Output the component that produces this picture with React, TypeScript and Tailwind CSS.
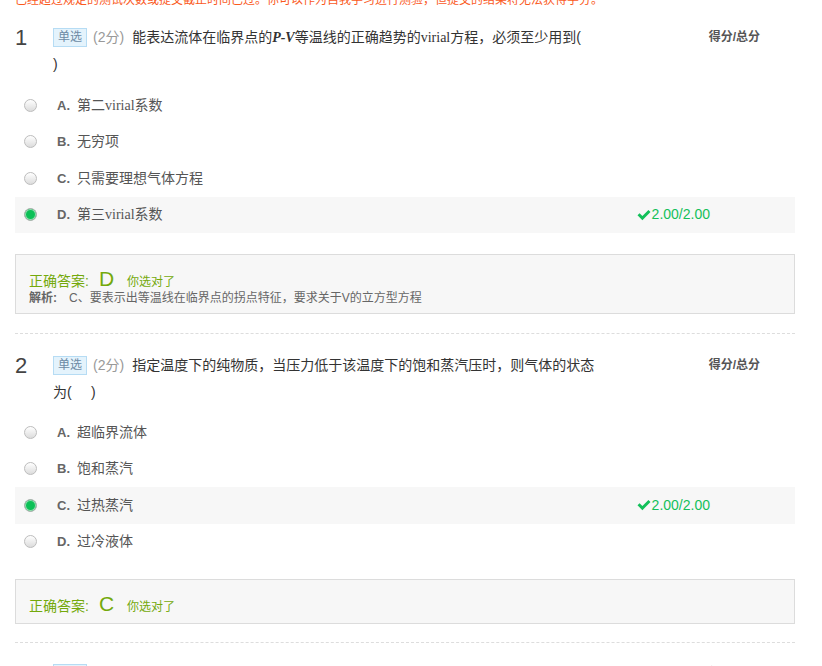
import React from "react";

const GREEN_ANS = "text-[#74a90b]";

function Tag() {
  return (
    <span className="inline-block align-top mt-[4px] h-[19px] px-[4px] border border-[#b6dcf4] bg-[#e4f3fc] text-[12px] leading-[17px] text-[#6c8aa4]">
      单选
    </span>
  );
}

function Check() {
  return (
    <svg width="14" height="12" viewBox="0 0 14 12" className="inline-block mr-[1px]">
      <path d="M0.5 6.3 L2.6 4.2 L5.4 7 L11.4 1 L13.5 3.1 L5.4 11.2 Z" fill="#13c05a" />
    </svg>
  );
}

function Radio({ checked }: { checked: boolean }) {
  if (checked) {
    return (
      <span className="block w-[13px] h-[13px] rounded-full border border-[#b0b0b0] bg-[#0cc057] shadow-[inset_0_0_0_1px_#8fdfae]" />
    );
  }
  return (
    <span className="block w-[13px] h-[13px] rounded-full border border-[#bdbdbd] bg-gradient-to-b from-[#ffffff] to-[#dcdcdc]" />
  );
}

type Opt = { label: string; text: React.ReactNode; checked?: boolean };

function Options({ opts }: { opts: Opt[] }) {
  return (
    <div className="flex flex-col">
      {opts.map((o) => (
        <div
          key={o.label}
          className={`flex items-center h-[36.5px] ${o.checked ? "bg-[#f7f7f7]" : ""}`}
        >
          <div className="ml-[9px]">
            <Radio checked={!!o.checked} />
          </div>
          <span className="ml-[20px] text-[13px] font-bold text-[#666]">{o.label}</span>
          <span className="ml-[7px] text-[14px] text-[#555]">{o.text}</span>
          {o.checked && (
            <span className="ml-auto mr-[85px] flex items-center text-[14px] text-[#13c05a]">
              <Check />
              2.00/2.00
            </span>
          )}
        </div>
      ))}
    </div>
  );
}

function Header({ num, children }: { num: string; children: React.ReactNode }) {
  return (
    <div className="flex items-start">
      <div className="w-[38px] text-[22px] leading-[27px] text-[#444]">{num}</div>
      <div className="w-[550px] text-[14px] leading-[27px] text-[#333]">{children}</div>
      <div className="ml-auto mr-[35px] text-[12px] leading-[27px] font-bold text-[#555]">得分/总分</div>
    </div>
  );
}

function Score() {
  return (
    <>
      <Tag />
      <span className="ml-[6px] text-[#999]">(2分)</span>
    </>
  );
}

function AnswerBox({ ans, analysis }: { ans: string; analysis?: string }) {
  return (
    <div className="border border-[#dcdcdc] bg-[#f7f7f7] pt-[12px] pb-[7px] pl-[13px]">
      <div className={`flex items-baseline h-[24px] ${GREEN_ANS}`}>
        <span className="text-[14px]">正确答案:</span>
        <span className="ml-[10px] text-[21px] leading-[24px]">{ans}</span>
        <span className="ml-[13px] text-[12px]">你选对了</span>
      </div>
      {analysis && (
        <div className="flex items-center h-[14px] mb-[1px] text-[12px] leading-[14px] text-[#666]">
          <span className="font-bold">解析:</span>
          <span className="ml-[12px]">{analysis}</span>
        </div>
      )}
    </div>
  );
}

const serif = { fontFamily: '"Liberation Serif", "Noto Sans CJK SC", serif' };

export default function App() {
  return (
    <div
      className="w-[822px] h-[666px] overflow-hidden bg-white"
      style={{ fontFamily: '"Liberation Sans", "Noto Sans CJK SC", sans-serif' }}
    >
      <div className="h-[6px] overflow-hidden pl-[15px]">
        <div className="-mt-[6px] text-[12px] leading-[12px] text-[#fa5a1e] whitespace-nowrap">
          已经超过规定的测试次数或提交截止时间已过。你可以作为自我学习进行测验，但提交的结果将无法获得学分。
        </div>
      </div>

      <div className="ml-[15px] w-[780px]">
        {/* Q1 */}
        <div className="mt-[18px]">
          <Header num="1">
            <Score />
            <span className="ml-[8px]">
              能表达流体在临界点的
              <span className="font-bold italic" style={serif}>P-V</span>
              等温线的正确趋势的<span style={serif}>virial</span>方程，必须至少用到(
            </span>
            <br />
            <span>)</span>
          </Header>
          <div className="mt-[9px]">
            <Options
              opts={[
                { label: "A.", text: <>第二<span style={serif}>virial</span>系数</> },
                { label: "B.", text: "无穷项" },
                { label: "C.", text: "只需要理想气体方程" },
                { label: "D.", text: <>第三<span style={serif}>virial</span>系数</>, checked: true },
              ]}
            />
          </div>
          <div className="mt-[21px]">
            <AnswerBox ans="D" analysis="C、要表示出等温线在临界点的拐点特征，要求关于V的立方型方程" />
          </div>
          <div className="mt-[19px] border-t border-dashed border-[#dddddd]" />
        </div>

        {/* Q2 */}
        <div className="mt-[18px]">
          <Header num="2">
            <Score />
            <span className="ml-[8px]">指定温度下的纯物质，当压力低于该温度下的饱和蒸汽压时，则气体的状态</span>
            <br />
            <span>为(&nbsp;&nbsp;&nbsp;&nbsp;&nbsp;)</span>
          </Header>
          <div className="mt-[8px]">
            <Options
              opts={[
                { label: "A.", text: "超临界流体" },
                { label: "B.", text: "饱和蒸汽" },
                { label: "C.", text: "过热蒸汽", checked: true },
                { label: "D.", text: "过冷液体" },
              ]}
            />
          </div>
          <div className="mt-[19px]">
            <AnswerBox ans="C" />
          </div>
          <div className="mt-[18px] border-t border-dashed border-[#dddddd]" />
        </div>

        {/* Q3 */}
        <div className="mt-[17px]">
          <Header num="3">
            <Score />
            <span className="ml-[8px]">对于纯物质，一定温度下的泡点压力与露点压力是(&nbsp;&nbsp;&nbsp;&nbsp;)</span>
          </Header>
        </div>
      </div>
    </div>
  );
}
